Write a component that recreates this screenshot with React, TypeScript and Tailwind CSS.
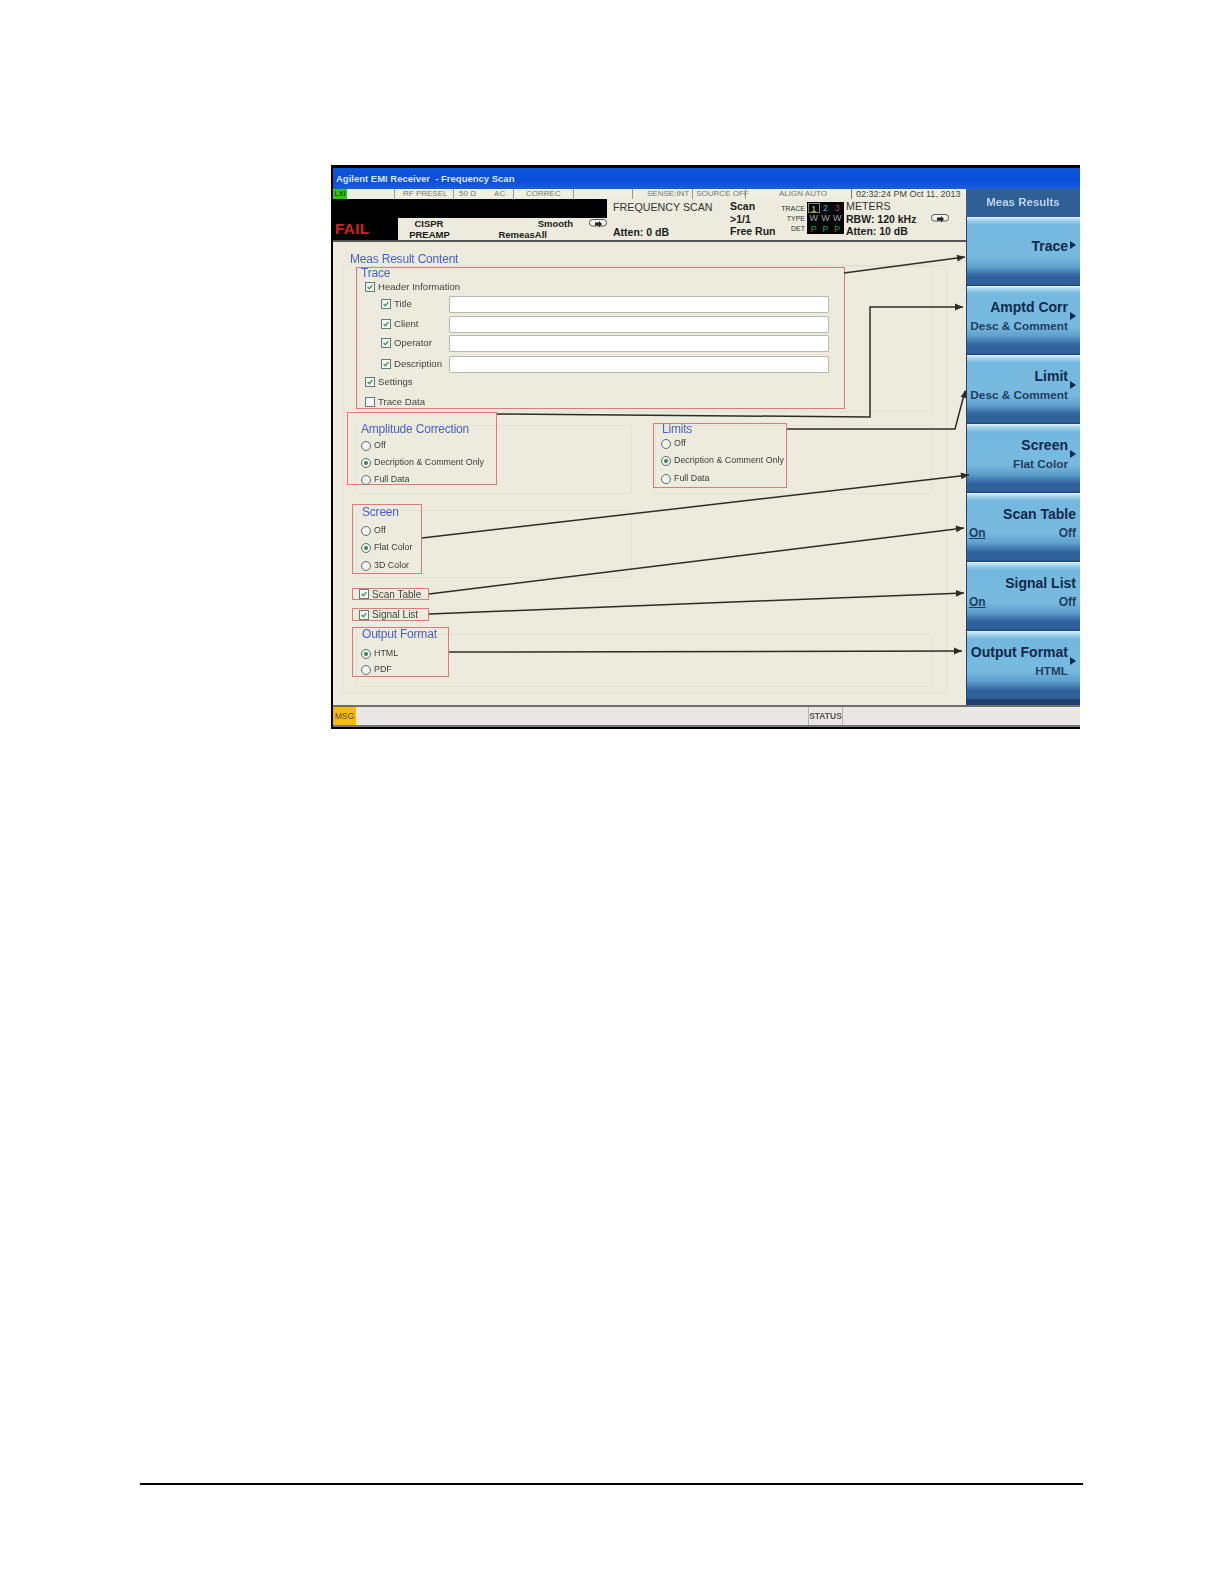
import React from "react";

function Check({ on = true }: { on?: boolean }) {
  return (
    <span className="w-[10px] h-[10px] shrink-0 border border-[#5f7a80] bg-[#f7f7f2] flex items-center justify-center">
      {on && (
        <svg viewBox="0 0 10 10" className="w-[8px] h-[8px]">
          <path d="M2 5 L4.2 7.2 L8 2.6" fill="none" stroke="#2f9a4c" strokeWidth="1.6" />
        </svg>
      )}
    </span>
  );
}

function Radio({ on = false }: { on?: boolean }) {
  return (
    <span className="w-[10px] h-[10px] shrink-0 rounded-full border border-[#5c6a70] bg-[#f4f4ee] flex items-center justify-center">
      {on && <span className="w-[4px] h-[4px] rounded-full bg-[#2f8a55]" />}
    </span>
  );
}

function RadioRow({ label, on, mt }: { label: string; on?: boolean; mt: string }) {
  return (
    <div className={`h-[14px] flex items-center gap-[3px] text-[8.9px] text-[#3c3c3c] ${mt}`}>
      <Radio on={on} />
      <span className="whitespace-nowrap">{label}</span>
    </div>
  );
}

function CheckRow({ label, mt, indent, on = true, children }: { label: string; mt: string; indent?: boolean; on?: boolean; children?: React.ReactNode }) {
  return (
    <div className={`h-[14px] flex items-center text-[9.6px] text-[#444] ${mt} ${indent ? "pl-[24px]" : "pl-[8px]"}`}>
      <Check on={on} />
      <span className={`ml-[3px] whitespace-nowrap ${indent ? "w-[55px] shrink-0" : ""}`}>{label}</span>
      {children}
    </div>
  );
}

function Field() {
  return <span className="block w-[380px] h-[17px] shrink-0 bg-white border border-[#b9b9b0] rounded-[1px]" />;
}

function Legend({ text, cls }: { text: string; cls: string }) {
  return <div className={`h-[16px] leading-[16px] text-[12px] tracking-[-0.2px] text-[#4a62c6] whitespace-nowrap ${cls}`}>{text}</div>;
}

function Loop() {
  return (
    <svg viewBox="0 0 18 10" className="w-[18px] h-[10px]">
      <rect x="0.5" y="0.5" width="17" height="6.5" rx="3" fill="#f4f4ee" stroke="#333" strokeWidth="0.8" />
      <path d="M6 3.6 H10 V2 L13 5 L10 8.5 V6.4 H6 Z" fill="#222" />
    </svg>
  );
}

function Softkey({ title, sub, arrow, onOff }: { title: string; sub?: string; arrow?: boolean; onOff?: boolean }) {
  const plain = !sub && !onOff;
  return (
    <div className="relative h-[69px] bg-[linear-gradient(180deg,#e6f3fa_0px,#a9d6ee_3px,#74b8df_8px,#78badf_40px,#5f9fcc_50px,#3f78ad_56px,#2f619b_60px,#2f619b_67px,#1d3f6e_69px)] border-l border-[#24456f] text-[#10294a]">
      <div className={`text-right font-bold text-[14px] leading-[16px] whitespace-nowrap ${plain ? "mt-[21px]" : "mt-[12.5px]"} ${onOff ? "pr-[4px]" : "pr-[12px]"}`}>{title}</div>
      {sub && <div className="text-right font-bold text-[11.8px] leading-[14px] text-[#1f3d5e] mt-[4px] pr-[12px] whitespace-nowrap">{sub}</div>}
      {onOff && (
        <div className="flex justify-between pl-[2px] pr-[4px] font-bold text-[12px] leading-[14px] text-[#1f3d5e] mt-[4.5px]">
          <span className="underline">On</span>
          <span>Off</span>
        </div>
      )}
      {arrow && <span className={`absolute right-[4px] w-0 h-0 border-y-[4px] border-y-transparent border-l-[6px] border-l-[#10294a] ${sub ? "top-[26px]" : "top-[24px]"}`} />}
    </div>
  );
}

function Arrow({ pts, tip }: { pts: string; tip: [number, number, number, number] }) {
  const [x, y, px, py] = tip;
  const a = Math.atan2(y - py, x - px);
  const l = 8;
  const w = 3.4;
  const bx = x - l * Math.cos(a);
  const by = y - l * Math.sin(a);
  const p1 = `${bx - w * Math.sin(a)},${by + w * Math.cos(a)}`;
  const p2 = `${bx + w * Math.sin(a)},${by - w * Math.cos(a)}`;
  return (
    <g>
      <polyline points={pts} fill="none" stroke="#2f2c25" strokeWidth="1.5" />
      <polygon points={`${x},${y} ${p1} ${p2}`} fill="#2f2c25" />
    </g>
  );
}

const red = "border border-[#e0787c]";
const faint = "border border-[#e3e2d3] rounded-[2px]";

export default function App() {
  return (
    <div className="relative w-[1224px] h-[1584px] bg-white font-['Liberation_Sans',Arial,sans-serif] overflow-hidden">
      <div className="pt-[165px] pl-[331px]">
        <div className="w-[749px] h-[564px] flex flex-col border-t-[3px] border-l-2 border-b-2 border-black blur-[0.5px]">
          {/* title bar */}
          <div className="h-[21px] shrink-0 bg-[linear-gradient(180deg,#0d56dc_0%,#0a4fd6_60%,#1a5fe0_100%)] text-[#d8e6fa] text-[9.5px] font-bold leading-[21px] pl-[3px] whitespace-nowrap">
            Agilent EMI Receiver &nbsp;- Frequency Scan
          </div>
          <div className="flex-1 flex min-h-0">
            {/* main */}
            <div className="w-[633px] shrink-0 flex flex-col bg-[#ecebdd]">
              {/* status row */}
              <div className="h-[10px] shrink-0 flex text-[8px] leading-[10px] text-[#777] bg-[#efeee3] whitespace-nowrap">
                <span className="w-[14px] bg-[#35c21f] text-[#153] text-[7px] font-bold text-center">LXI</span>
                <span className="w-[47px]" />
                <span className="w-[59px] border-l border-[#999] pl-[8px]">RF PRESEL</span>
                <span className="w-[60px] border-l border-[#999] pl-[5px] flex gap-[18px]"><span>50 Ω</span><span>AC</span></span>
                <span className="w-[60px] border-l border-[#999] pl-[12px]">CORREC</span>
                <span className="w-[59px] border-l border-[#999]" />
                <span className="w-[113px] border-l border-[#999] pl-[14px] flex">SENSE:INT<span className="ml-[3px] border-l border-[#999] pl-[3px]">SOURCE OFF</span></span>
                <span className="w-[106px] border-l border-[#999] pl-[33px]">ALIGN AUTO</span>
                <span className="border-l border-[#777] pl-[4px] text-[#444] text-[9px]">02:32:24 PM Oct 11, 2013</span>
              </div>
              {/* header */}
              <div className="h-[43px] shrink-0 flex border-b-2 border-[#555] text-[#1c1c1c] whitespace-nowrap">
                <div className="w-[274px] shrink-0 flex flex-col">
                  <div className="h-[19px] bg-black" />
                  <div className="flex-1 flex">
                    <div className="w-[66px] bg-black text-[#d8201e] font-bold text-[15px] leading-[22px] pl-[2px] tracking-[0.5px]">FAIL</div>
                    <div className="w-[58px] pl-[7px] text-center font-bold text-[9.5px] leading-[11px]">
                      <div className="-ml-[2px]">CISPR</div>
                      <div className="-ml-[1px]">PREAMP</div>
                    </div>
                    <div className="w-[120px] text-right font-bold text-[9.5px] leading-[11px]">
                      <div>Smooth</div>
                      <div className="pr-[26px]">RemeasAll</div>
                    </div>
                    <div className="pl-[16px] pt-[1px]"><Loop /></div>
                  </div>
                </div>
                <div className="w-[123px] shrink-0 pl-[6px]">
                  <div className="text-[10.7px] leading-[14px] mt-[1px] text-[#333]">FREQUENCY SCAN</div>
                  <div className="font-bold text-[10.5px] leading-[14px] mt-[11px]">Atten: 0 dB</div>
                </div>
                <div className="w-[49px] shrink-0 font-bold text-[10.5px] leading-[12.5px] pt-[1px]">
                  <div>Scan</div>
                  <div>&gt;1/1</div>
                  <div>Free Run</div>
                </div>
                <div className="w-[26px] shrink-0 text-right text-[7px] leading-[10px] text-[#333] pt-[5px]">
                  <div>TRACE</div>
                  <div>TYPE</div>
                  <div>DET</div>
                </div>
                <div className="w-[37px] h-[32px] shrink-0 ml-[2px] mt-[3px] bg-black grid grid-cols-3 grid-rows-3 text-[9px] leading-[10px] text-center pt-[1px] px-[1px]">
                  <span className="text-[#b6e36a] border border-[#8a8a5a]">1</span><span className="text-[#37b7d8]">2</span><span className="text-[#c02a8c]">3</span>
                  <span className="text-[#a9a9a9]">W</span><span className="text-[#a9a9a9]">W</span><span className="text-[#a9a9a9]">W</span>
                  <span className="text-[#1fa038]">P</span><span className="text-[#1fa038]">P</span><span className="text-[#1fa038]">P</span>
                </div>
                <div className="w-[85px] shrink-0 pl-[2px] font-bold text-[10.5px] leading-[12.5px] pt-[1px]">
                  <div className="font-normal text-[10.7px] text-[#333]">METERS</div>
                  <div>RBW: 120 kHz</div>
                  <div>Atten: 10 dB</div>
                </div>
                <div className="pl-[2px] pt-[15px]"><Loop /></div>
              </div>
              {/* form */}
              <div className="flex-1 pl-[9px] pt-[23px]">
                <div className={`relative w-[605px] h-[428px] ${faint}`}>
                  <Legend text="Meas Result Content" cls="-mt-[15px] ml-[6px] w-fit px-[1px] bg-[#ecebdd]" />
                  {/* Trace */}
                  <div className={`ml-[14px] -mt-[1px] w-[576px] h-[146px] ${faint}`}>
                    <div className={`w-[489px] h-[142px] -ml-[2px] ${red}`}>
                      <Legend text="Trace" cls="pl-[4px] -mt-[3px]" />
                      <CheckRow label="Header Information" mt="-mt-[1px]" />
                      <CheckRow label="Title" mt="mt-[3px]" indent><Field /></CheckRow>
                      <CheckRow label="Client" mt="mt-[6px]" indent><Field /></CheckRow>
                      <CheckRow label="Operator" mt="mt-[5px]" indent><Field /></CheckRow>
                      <CheckRow label="Description" mt="mt-[7px]" indent><Field /></CheckRow>
                      <CheckRow label="Settings" mt="mt-[4px]" />
                      <CheckRow label="Trace Data" mt="mt-[6px]" on={false} />
                    </div>
                  </div>
                  {/* Amp + Limits */}
                  <div className="flex ml-[13px] mt-[13px]">
                    <div className={`w-[276px] h-[69px] ${faint}`}>
                      <div className={`w-[150px] h-[73px] -ml-[10px] -mt-[14px] pl-[13px] pt-[8px] ${red}`}>
                        <Legend text="Amplitude Correction" cls="" />
                        <RadioRow label="Off" mt="mt-[2px]" />
                        <RadioRow label="Decription & Comment Only" on mt="mt-[3px]" />
                        <RadioRow label="Full Data" mt="mt-[3px]" />
                      </div>
                    </div>
                    <div className={`w-[277px] h-[69px] ml-[23px] ${faint}`}>
                      <div className={`w-[134px] h-[65px] -ml-[3px] -mt-[3px] pl-[7px] ${red}`}>
                        <Legend text="Limits" cls="-mt-[3px] pl-[1px]" />
                        <RadioRow label="Off" mt="mt-0" />
                        <RadioRow label="Decription & Comment Only" on mt="mt-[3px]" />
                        <RadioRow label="Full Data" mt="mt-[4px]" />
                      </div>
                    </div>
                  </div>
                  {/* Screen */}
                  <div className={`ml-[13px] mt-[16px] w-[276px] h-[68px] ${faint}`}>
                    <div className={`w-[70px] h-[70px] -ml-[5px] -mt-[7px] pl-[8px] ${red}`}>
                      <Legend text="Screen" cls="-mt-[1px] pl-[1px]" />
                      <RadioRow label="Off" mt="mt-[4px]" />
                      <RadioRow label="Flat Color" on mt="mt-[3px]" />
                      <RadioRow label="3D Color" mt="mt-[4px]" />
                    </div>
                  </div>
                  {/* Scan / Signal */}
                  <div className={`ml-[9px] mt-[10px] w-[77px] h-[12px] pl-[6px] flex items-center gap-[3px] text-[10px] text-[#444] ${red}`}>
                    <Check /><span>Scan Table</span>
                  </div>
                  <div className={`ml-[9px] mt-[8px] w-[77px] h-[13px] pl-[6px] flex items-center gap-[3px] text-[10px] text-[#444] ${red}`}>
                    <Check /><span>Signal List</span>
                  </div>
                  {/* Output */}
                  <div className={`ml-[13px] mt-[13px] w-[576px] h-[53px] ${faint}`}>
                    <div className={`w-[97px] h-[50px] -ml-[5px] -mt-[8px] pl-[8px] ${red}`}>
                      <Legend text="Output Format" cls="-mt-[2px] pl-[1px]" />
                      <RadioRow label="HTML" on mt="mt-[5px]" />
                      <RadioRow label="PDF" mt="mt-[2px]" />
                    </div>
                  </div>
                </div>
              </div>
            </div>
            {/* softkeys */}
            <div className="flex-1 flex flex-col bg-[#1d3f6e]">
              <div className="h-[28px] shrink-0 bg-[#2f5f95] text-[#bcd6ec] font-bold text-[11.5px] leading-[26px] text-center">Meas Results</div>
              <Softkey title="Trace" arrow />
              <Softkey title="Amptd Corr" sub="Desc & Comment" arrow />
              <Softkey title="Limit" sub="Desc & Comment" arrow />
              <Softkey title="Screen" sub="Flat Color" arrow />
              <Softkey title="Scan Table" onOff />
              <Softkey title="Signal List" onOff />
              <Softkey title="Output Format" sub="HTML" arrow />
            </div>
          </div>
          {/* bottom status */}
          <div className="h-[22px] shrink-0 flex bg-[#e9e6e6] border-t-2 border-[#6f6f68] text-[8.5px] font-bold text-[#555] leading-[18px] border-b-2 border-b-[#777]">
            <span className="w-[23px] bg-[#f2bb12] pl-[2px] font-normal text-[#5a4a10]">MSG</span>
            <span className="w-[452px]" />
            <span className="w-[35px] border-x border-[#b5b5b0] text-center">STATUS</span>
          </div>
        </div>
      </div>

      {/* footer rule */}
      <div className="absolute left-[140px] top-[1483px] w-[943px] h-[2px] bg-black" />

      {/* annotation arrows */}
      <svg className="absolute inset-0 w-[1224px] h-[1584px] pointer-events-none blur-[0.3px]" viewBox="0 0 1224 1584">
        <Arrow pts="844,273 965,257" tip={[965, 257, 844, 273]} />
        <Arrow pts="497,414 870,417 870,307 963,307" tip={[963, 307, 870, 307]} />
        <Arrow pts="787,429 955,429 965,391" tip={[966, 390, 955, 429]} />
        <Arrow pts="422,538 969,475" tip={[969, 475, 422, 538]} />
        <Arrow pts="429,594 964,528" tip={[964, 528, 429, 594]} />
        <Arrow pts="429,614 964,593" tip={[964, 593, 429, 614]} />
        <Arrow pts="449,652 962,651" tip={[962, 651, 449, 652]} />
      </svg>
    </div>
  );
}
